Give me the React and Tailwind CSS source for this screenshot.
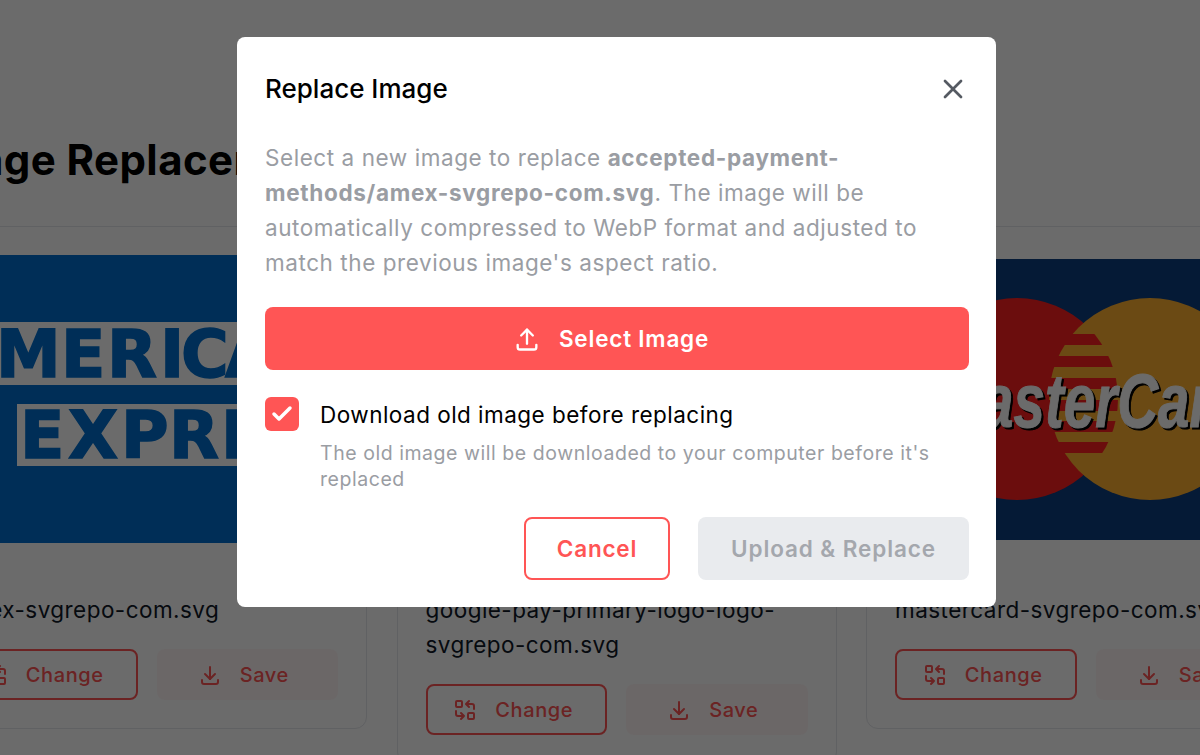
import { Check, X } from 'lucide-react'
import { TbDownload, TbReplace, TbUpload } from 'react-icons/tb'

function AmexLogo() {
  return (
    <div className="h-full w-full bg-[#016fd0]">
      <svg width="382" height="288" viewBox="0 0 382 288" className="block">
        <g transform="translate(44 0)">
          <rect x="-80" y="67" width="480" height="63" fill="#fff" />
          <rect x="17" y="149" width="380" height="62" fill="#fff" />
          <text
            x="-64 -4 61 107 160 181 225 278"
            y="122"
            fontFamily="DejaVu Sans"
            fontWeight="700"
            fontSize="65"
            fill="#016fd0"
            stroke="#016fd0"
            strokeWidth="1.5"
          >
            AMERICAN
          </text>
          <text
            x="20 68 121 169 221 270 320"
            y="203"
            fontFamily="DejaVu Sans"
            fontWeight="700"
            fontSize="65"
            fill="#016fd0"
            stroke="#016fd0"
            strokeWidth="1.5"
          >
            EXPRESS
          </text>
        </g>
      </svg>
    </div>
  )
}

function MastercardLogo() {
  return (
    <div className="flex h-full items-center">
      <svg width="382" height="281" viewBox="0 0 382 281" className="block bg-[#0e3e80]">
        <defs>
          <clipPath id="mc-lens">
            <circle cx="122" cy="140" r="101" />
          </clipPath>
        </defs>
        <circle cx="122" cy="140" r="101" fill="#ff2020" />
        <circle cx="255" cy="140" r="101" fill="#ffb030" />
        <g clipPath="url(#mc-lens)">
          <rect x="150" y="75" width="80" height="11" fill="#ff2020" />
          <rect x="150" y="97" width="80" height="11" fill="#ff2020" />
          <rect x="150" y="119" width="80" height="11" fill="#ff2020" />
          <rect x="150" y="141" width="80" height="11" fill="#ff2020" />
          <rect x="150" y="162" width="80" height="11" fill="#ff2020" />
          <rect x="150" y="183" width="80" height="11" fill="#ff2020" />
        </g>
        <text
          x="40"
          y="168"
          textLength="311"
          lengthAdjust="spacingAndGlyphs"
          fontFamily="Liberation Sans"
          fontWeight="700"
          fontStyle="italic"
          fontSize="76"
          fill="#fff"
          stroke="#fff"
          strokeWidth="1"
          className="drop-shadow-[2px_2px_0_#000]"
        >
          MasterCard
        </text>
      </svg>
    </div>
  )
}

function FileCard({ name, logo }) {
  return (
    <div className="rounded-xl border border-gray-200 bg-white px-[28px] pt-[28px] pb-[28px]">
      <div className="h-[288px] overflow-hidden">{logo}</div>
      <p className="mt-[49px] text-[22.5px] leading-[35px] tracking-[0.02em] text-gray-900">{name}</p>
      <div className="mt-[22px] flex gap-[19px]">
        <button className="flex h-[51px] w-[182px] items-center justify-center gap-[18px] rounded-lg border-2 border-[#ff5555] pr-[6px] text-[20px] font-medium tracking-[0.03em] text-[#ff5555]">
          <TbReplace className="size-[24px]" />
          Change
        </button>
        <button className="flex h-[51px] w-[182px] items-center justify-center gap-[18px] rounded-lg bg-[#ff5555]/5 pr-[8px] text-[20px] font-medium tracking-[0.03em] text-[#ff5555]">
          <TbDownload className="size-[24px]" />
          Save
        </button>
      </div>
    </div>
  )
}

export default function App() {
  return (
    <div className="relative h-[755px] w-[1200px] overflow-hidden bg-white font-[Inter,sans-serif]">
      {/* Page behind the dialog */}
      <div className="ml-[-73px] w-[1379px] pt-[136px]">
        <h1 className="mb-[42px] ml-[1px] text-[42px] leading-[48px] font-bold tracking-[0.01em] text-black">
          Image Replacement
        </h1>
        <div className="grid grid-cols-[440px_440px_440px] items-start gap-[29.5px]">
          <FileCard name="amex-svgrepo-com.svg" logo={<AmexLogo />} />
          <FileCard name="google-pay-primary-logo-logo-svgrepo-com.svg" />
          <FileCard name="mastercard-svgrepo-com.svg" logo={<MastercardLogo />} />
        </div>
      </div>

      {/* Backdrop + dialog */}
      <div className="absolute inset-0 flex items-start bg-black/58 pt-[37px] pl-[237px]">
        <div className="h-[570px] w-[759px] rounded-lg bg-white py-[28px] pr-[27px] pl-[28px]">
          <div className="flex items-center justify-between">
            <h2 className="text-[26px] leading-[48px] font-medium text-black">Replace Image</h2>
            <X className="size-[32px] text-[#555a62]" strokeWidth={2} />
          </div>
          <p className="mt-[27px] text-[22.5px] leading-[35px] tracking-[0.025em] text-[#9a9da3]">
            Select a new image to replace <strong className="font-bold tracking-[0.03em]">accepted-payment-methods/amex-svgrepo-com.svg</strong>. The image will be automatically compressed to WebP format and adjusted to match the previous image's aspect ratio.
          </p>
          <button className="mt-[27px] flex h-[63px] w-full items-center justify-center gap-[18px] rounded-lg bg-[#ff5555] pr-[12px] text-[22.5px] font-semibold tracking-[0.035em] text-white">
            <TbUpload className="size-[28px]" />
            Select Image
          </button>
          <div className="mt-[27px] flex gap-[21px]">
            <div className="flex size-[34px] shrink-0 items-center justify-center rounded-md bg-[#ff5555]">
              <Check className="size-[24px] text-white" strokeWidth={3.5} />
            </div>
            <div>
              <p className="text-[22.5px] leading-[36px] tracking-[0.021em] text-black">Download old image before replacing</p>
              <p className="mt-[7px] text-[19.5px] leading-[26px] tracking-[0.028em] text-[#9a9da3]">
                The old image will be downloaded to your computer before it's replaced
              </p>
            </div>
          </div>
          <div className="mt-[25px] flex justify-end gap-[28px]">
            <button className="h-[63px] w-[146px] rounded-lg border-2 border-[#ff5555] text-[22.5px] font-semibold tracking-[0.035em] text-[#ff5555]">
              Cancel
            </button>
            <button className="h-[63px] w-[271px] rounded-lg bg-[#e9ebee] text-[22.5px] font-semibold tracking-[0.04em] text-[#a4a7ad]">
              Upload &amp; Replace
            </button>
          </div>
        </div>
      </div>
    </div>
  )
}
